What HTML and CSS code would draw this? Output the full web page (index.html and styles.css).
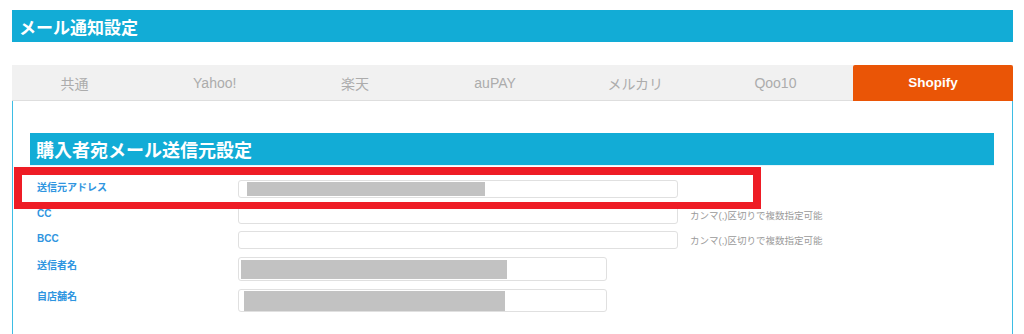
FILE: index.html
```html
<!DOCTYPE html>
<html lang="ja">
<head>
<meta charset="utf-8">
<title>メール通知設定</title>
<link rel="stylesheet" href="styles.css">
</head>
<body>
<div class="page">
  <div class="title-bar">メール通知設定</div>
  <div class="tabs">
    <div class="tab">共通</div>
    <div class="tab">Yahoo!</div>
    <div class="tab">楽天</div>
    <div class="tab">auPAY</div>
    <div class="tab">メルカリ</div>
    <div class="tab">Qoo10</div>
    <div class="tab tab-active">Shopify</div>
  </div>
  <div class="panel">
    <div class="section-head">購入者宛メール送信元設定</div>
    <div class="form">
      <div class="row row-1">
        <div class="label">送信元アドレス</div>
        <div class="field field-wide"><span class="redact redact-1"></span></div>
      </div>
      <div class="row row-2">
        <div class="label">CC</div>
        <div class="field field-wide"></div>
        <div class="hint">カンマ(,)区切りで複数指定可能</div>
      </div>
      <div class="row row-3">
        <div class="label">BCC</div>
        <div class="field field-wide"></div>
        <div class="hint">カンマ(,)区切りで複数指定可能</div>
      </div>
      <div class="row row-4">
        <div class="label">送信者名</div>
        <div class="field field-mid"><span class="redact redact-4"></span></div>
      </div>
      <div class="row row-5">
        <div class="label">自店舗名</div>
        <div class="field field-mid"><span class="redact redact-5"></span></div>
      </div>
    </div>
  </div>
  <div class="highlight"></div>
</div>
</body>
</html>
```

FILE: styles.css
```css
html, body {
  margin: 0;
  padding: 0;
  background: #ffffff;
}

body {
  font-family: "Liberation Sans", "Noto Sans CJK JP", sans-serif;
}

.page {
  position: relative;
  width: 1001px;
  margin-left: 12px;
  padding-top: 10px;
  height: 324px;
  overflow: hidden;
}

.title-bar {
  height: 32px;
  background: #12acd6;
  color: #ffffff;
  font-family: "Noto Sans CJK JP", sans-serif;
  font-weight: 700;
  font-size: 17px;
  padding-left: 7px;
  display: flex;
  align-items: center;
}

.tabs {
  margin-top: 23px;
  height: 36px;
  display: grid;
  grid-template-columns: repeat(6, 1fr) 160px;
  background: #f1f1f1;
}

.tab {
  display: flex;
  align-items: center;
  justify-content: center;
  padding-right: 15px;
  font-size: 14px;
  color: #acacac;
  border-bottom: 1px solid #dedede;
  box-sizing: border-box;
}

.tab-active {
  padding-right: 0;
  background: #ea5506;
  color: #ffffff;
  font-weight: 700;
  font-size: 13.5px;
  border-bottom-color: #ea5506;
  border-radius: 2px 2px 0 0;
}

.panel {
  border-left: 1px solid #3dbde4;
  border-right: 1px solid #3dbde4;
  padding: 32px 18px 60px 17px;
}

.section-head {
  height: 32px;
  background: #12acd6;
  color: #ffffff;
  font-family: "Noto Sans CJK JP", sans-serif;
  font-weight: 700;
  font-size: 18px;
  padding-left: 6px;
  display: flex;
  align-items: center;
  box-shadow: 0 1px 0 #e6f5fa;
}

.form {
  padding-left: 7px;
  padding-top: 15px;
}

.row {
  display: flex;
  align-items: flex-start;
}

.row-2 { margin-top: 8px; }
.row-3 { margin-top: 7px; }
.row-4 { margin-top: 8px; }
.row-5 { margin-top: 8px; }

.label {
  width: 201px;
  flex: 0 0 201px;
  font-size: 10px;
  line-height: 14px;
  margin-top: 1px;
  font-weight: 700;
  color: #2f95e0;
}

.row-4 .label { margin-top: 2px; }

.field {
  box-sizing: border-box;
  border: 1px solid #e0e0e0;
  border-radius: 3px;
  background: #ffffff;
  display: flex;
  align-items: center;
}

.field-wide {
  width: 440px;
  height: 18px;
}

.field-mid {
  width: 369px;
  height: 24px;
}

.row-5 .field-mid { height: 23px; }

.redact {
  display: block;
  background: #c2c2c2;
}

.redact-1 {
  margin-left: 8px;
  width: 238px;
  height: 14px;
}

.redact-4 {
  margin-left: 2px;
  width: 266px;
  height: 19px;
}

.redact-5 {
  margin-left: 5px;
  width: 261px;
  height: 20px;
}

.hint {
  align-self: center;
  margin-left: 12px;
  font-size: 9.5px;
  color: #9a9a9a;
  white-space: nowrap;
}

.highlight {
  position: absolute;
  left: 2px;
  top: 167px;
  width: 747px;
  height: 42px;
  box-sizing: border-box;
  border: 8px solid #ee1c25;
  border-bottom-width: 7px;
}
```
